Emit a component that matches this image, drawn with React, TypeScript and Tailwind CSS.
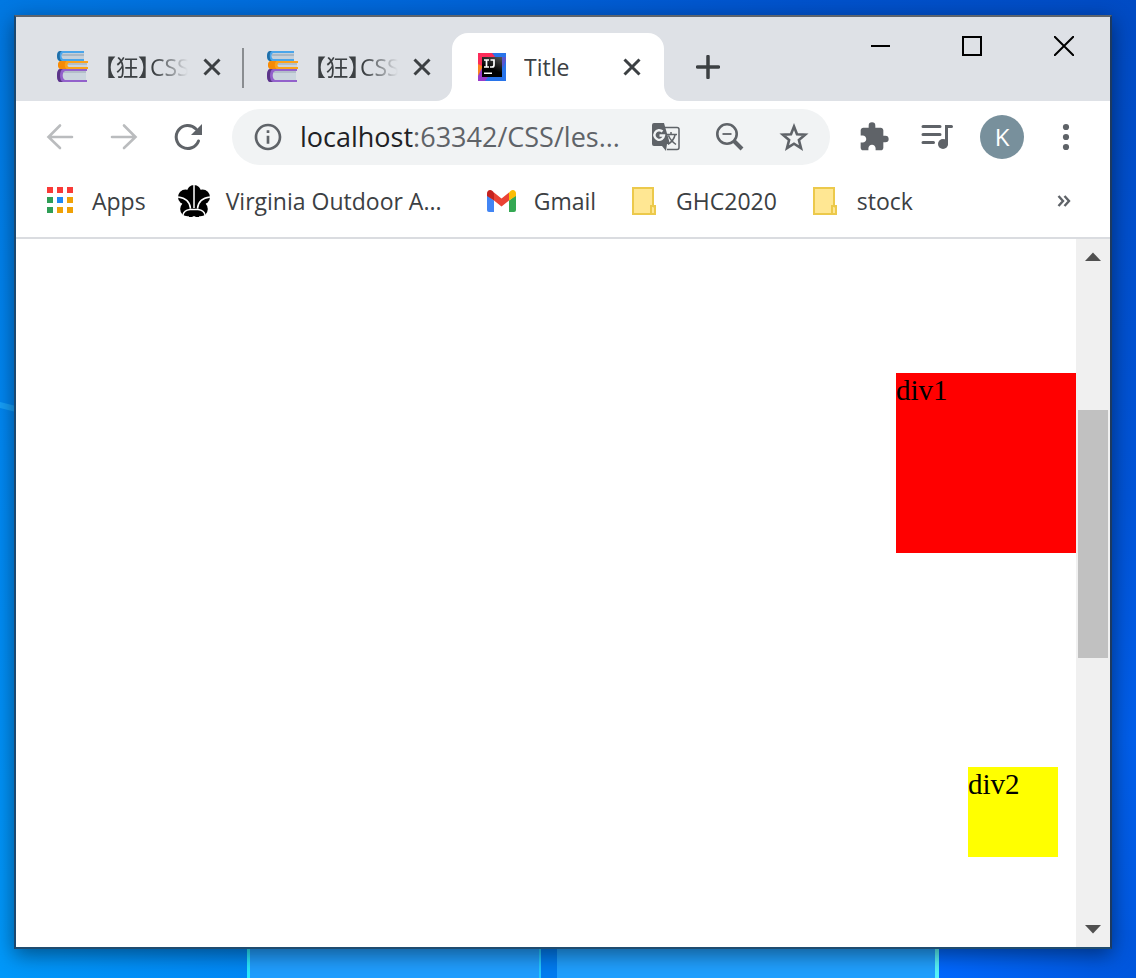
import React from "react";
import { MdExtension, MdInfoOutline, MdStarBorder } from "react-icons/md";

function Wallpaper() {
  return (
    <svg
      aria-hidden="true"
      className="absolute inset-0 h-full w-full"
      viewBox="0 0 1136 978"
      preserveAspectRatio="none"
    >
      <defs>
        <linearGradient id="sky" x1="0" y1="0" x2="1" y2="0">
          <stop offset="0" stopColor="#0078e2" />
          <stop offset="0.35" stopColor="#0066d8" />
          <stop offset="0.7" stopColor="#0052cc" />
          <stop offset="1" stopColor="#004bc4" />
        </linearGradient>
        <linearGradient id="left" x1="0" y1="0" x2="0" y2="1">
          <stop offset="0" stopColor="#0078e2" />
          <stop offset="0.45" stopColor="#0088f4" />
          <stop offset="1" stopColor="#0098fa" />
        </linearGradient>
        <linearGradient id="right" x1="0" y1="0" x2="0" y2="1">
          <stop offset="0" stopColor="#004bc4" />
          <stop offset="0.5" stopColor="#0054d8" />
          <stop offset="0.75" stopColor="#005eea" />
          <stop offset="1" stopColor="#0058e0" />
        </linearGradient>
        <linearGradient id="floorLeft" x1="0" y1="0" x2="1" y2="0">
          <stop offset="0" stopColor="#0098fa" />
          <stop offset="1" stopColor="#0088f6" />
        </linearGradient>
        <linearGradient id="floorRight" x1="0" y1="0" x2="1" y2="0">
          <stop offset="0" stopColor="#0068ff" />
          <stop offset="1" stopColor="#0056dc" />
        </linearGradient>
      </defs>
      <rect width="1136" height="978" fill="url(#sky)" />
      <rect y="16" width="60" height="962" fill="url(#left)" />
      <path d="M0 402l16 4v6l-16-4z" fill="#16a0fa" />
      <rect x="1080" y="16" width="56" height="962" fill="url(#right)" />
      <rect y="930" width="247" height="48" fill="url(#floorLeft)" />
      <rect x="247" y="930" width="293" height="48" fill="#209eff" />
      <rect x="540" y="930" width="17" height="48" fill="#007cf2" />
      <rect x="557" y="930" width="380" height="48" fill="#20a0ff" />
      <rect x="937" y="930" width="199" height="48" fill="url(#floorRight)" />
      <rect x="247" y="930" width="3" height="48" fill="#2ae8ff" />
      <rect x="539" y="930" width="2" height="48" fill="#24c8ff" />
      <rect x="935" y="930" width="4" height="48" fill="#58f4fa" />
    </svg>
  );
}

function Books() {
  return (
    <svg aria-hidden="true" className="size-8 shrink-0" viewBox="0 0 32 32">
      <path d="M5 1h23v9H5z" fill="#c5d0da" />
      <path d="M6 3h22v2H6z" fill="#a9b7c4" />
      <path d="M4 0h24v2H7C5 3 5 7 7 8h21v2H4C0 10 0 0 4 0z" fill="#4aa5ea" />
      <path d="M4 0C0 0 0 10 4 10h2C3 9 3 1 6 0z" fill="#206fa8" />
      <path d="M8 11h23v7H8z" fill="#cbd5de" />
      <path d="M10 12h21v2H10z" fill="#b3bfca" />
      <path d="M5 10h27v2H13c-2 0-2 4 0 4h19v2H5c-4 0-4-8 0-8z" fill="#fba31c" />
      <path d="M5 10c-4 0-4 8 0 8h6c-3-1-3-7 0-8z" fill="#f58a08" />
      <path d="M7 19h23v11H7z" fill="#cbd5de" />
      <path d="M8 20h22v2H8z" fill="#b3bfca" />
      <path d="M4 18h27v2H9c-3 1-3 8 0 9h22v2H4c-4 0-4-13 0-13z" fill="#9261cb" />
      <path d="M4 18c-4 0-4 13 0 13h3c-4-1-4-12 0-13z" fill="#5a3488" />
    </svg>
  );
}

function IdeaLogo() {
  return (
    <svg aria-hidden="true" className="size-8 shrink-0" viewBox="0 0 32 32">
      <defs>
        <linearGradient id="ideaScreen" x1="1" y1="0" x2="0.7" y2="0.7">
          <stop offset="0" stopColor="#555" />
          <stop offset="1" stopColor="#000" />
        </linearGradient>
      </defs>
      <path d="M2 2h28v28H2z" fill="#2874ea" />
      <path d="M2 2h14l4 5-7 13L2 16z" fill="#fc2b59" />
      <path d="M24 6h6v3l-3 8z" fill="#5b57cf" />
      <path d="M2 13l4 2v10l-4 2z" fill="#fb8421" />
      <path d="M2 25l4-8v9h6l-3 4H2z" fill="#9a3bca" />
      <path d="M6 6h20v20H6z" fill="url(#ideaScreen)" />
      <path
        d="M8 9h5M10.500 9v7M8 16h5M14.500 9h3.500v5q0 2-2 2h-2"
        fill="none"
        stroke="#fff"
        strokeWidth="1.700"
      />
      <path d="M8 21.500h8v1.500H8z" fill="#fff" />
    </svg>
  );
}

function CloseGlyph() {
  return (
    <svg aria-hidden="true" className="size-6" viewBox="0 0 24 24">
      <path d="M4.500 4.500l15 15M19.500 4.500l-15 15" stroke="#3c4043" strokeWidth="3" />
    </svg>
  );
}

function Tab({
  title,
  active = false,
  divider = false,
}: {
  title: string;
  active?: boolean;
  divider?: boolean;
}) {
  return (
    <div
      className={
        active
          ? "relative flex h-[68px] w-[212px] min-w-0 items-center rounded-t-2xl bg-white pr-5 pl-6"
          : "relative flex h-[68px] w-[210px] min-w-0 items-center pr-[18px] pl-6"
      }
    >
      {divider && <span className="absolute top-[15px] left-0 h-10 w-[2px] bg-[#8a8d91]" />}
      {active && (
        <>
          <span className="absolute bottom-0 -left-4 size-4 bg-white">
            <span className="block size-4 rounded-br-2xl bg-[#dee1e6]" />
          </span>
          <span className="absolute -right-4 bottom-0 size-4 bg-white">
            <span className="block size-4 rounded-bl-2xl bg-[#dee1e6]" />
          </span>
        </>
      )}
      {active ? <IdeaLogo /> : <Books />}
      <button
        type="button"
        role="tab"
        aria-selected={active}
        className={
          active
            ? "ml-4 min-w-0 flex-1 overflow-hidden text-left whitespace-nowrap"
            : "ml-4 min-w-0 flex-1 overflow-hidden mask-r-from-60% mask-r-to-100% text-left whitespace-nowrap [font-feature-settings:'palt']"
        }
      >
        {title}
      </button>
      <button type="button" aria-label="Close tab" className="ml-3 shrink-0">
        <CloseGlyph />
      </button>
    </div>
  );
}

function TabStrip() {
  return (
    <div className="flex h-[84px] items-start bg-[#dee1e6]">
      <div role="tablist" className="flex min-w-0 self-end pl-4">
        <Tab title="【狂】CSS" />
        <Tab title="【狂】CSS" divider />
        <Tab title="Title" active />
      </div>
      <button
        type="button"
        aria-label="New tab"
        className="mb-[14px] ml-6 flex size-10 items-center justify-center self-end"
      >
        <svg aria-hidden="true" className="size-6" viewBox="0 0 24 24">
          <path
            d="M12 1.500v21M1.500 12h21"
            stroke="#3c4043"
            strokeWidth="3.500"
            strokeLinecap="round"
          />
        </svg>
      </button>
      <div className="ml-auto flex">
        <button type="button" aria-label="Minimize" className="flex h-[58px] w-[92px] items-center justify-center">
          <svg aria-hidden="true" className="size-5" viewBox="0 0 20 20">
            <path d="M1 9h20v2H1z" />
          </svg>
        </button>
        <button type="button" aria-label="Maximize" className="flex h-[58px] w-[92px] items-center justify-center">
          <svg aria-hidden="true" className="size-5" viewBox="0 0 20 20">
            <path d="M1 1h18v18H1z" fill="none" stroke="#000" strokeWidth="2" />
          </svg>
        </button>
        <button type="button" aria-label="Close" className="flex h-[58px] w-[92px] items-center justify-center">
          <svg aria-hidden="true" className="size-5" viewBox="0 0 20 20">
            <path d="M0 0l20 20M20 0L0 20" stroke="#000" strokeWidth="2" />
          </svg>
        </button>
      </div>
    </div>
  );
}

function ToolButton({ label, children }: { label: string; children: React.ReactNode }) {
  return (
    <button
      type="button"
      aria-label={label}
      className="flex h-14 w-16 shrink-0 items-center justify-center text-[#5f6368]"
    >
      {children}
    </button>
  );
}

function Toolbar() {
  return (
    <div className="flex h-[72px] items-center px-3">
      <ToolButton label="Back">
        <svg aria-hidden="true" className="size-8" viewBox="0 0 32 32" fill="none" stroke="#babcbe" strokeWidth="2.600" strokeLinecap="round">
          <path d="M4.500 16H28M16 4.500L4.500 16 16 27" />
        </svg>
      </ToolButton>
      <ToolButton label="Forward">
        <svg aria-hidden="true" className="size-8" viewBox="0 0 32 32" fill="none" stroke="#babcbe" strokeWidth="2.600" strokeLinecap="round">
          <path d="M27.500 16H4M16 4.500L27.500 16 16 27" />
        </svg>
      </ToolButton>
      <ToolButton label="Reload">
        <svg aria-hidden="true" className="size-8" viewBox="0 0 32 32">
          <path
            d="M24 8A11.500 11.500 0 1 0 26.500 20"
            fill="none"
            stroke="currentColor"
            strokeWidth="3"
            strokeLinecap="round"
          />
          <path d="M30 3v11H19z" fill="currentColor" />
        </svg>
      </ToolButton>
      <div className="mx-3 flex h-14 min-w-0 flex-1 items-center rounded-full bg-[#f1f3f4] pr-1 pl-5">
        <MdInfoOutline aria-hidden="true" className="size-8 shrink-0 text-[#5f6368]" />
        <div className="relative ml-4 h-full min-w-0 flex-1">
          <p className="truncate text-[27px] leading-[56px] text-[#5f6368]">
            <span className="text-[#202124]">localhost</span>:63342/CSS/les...
          </p>
          <input
            type="text"
            aria-label="Address"
            className="absolute inset-0 bg-transparent outline-none"
          />
        </div>
        <ToolButton label="Translate this page">
          <svg aria-hidden="true" className="size-8" viewBox="0 0 32 32">
            <path
              d="M15 6.500h12a2 2 0 0 1 2 2v18a2 2 0 0 1-2 2H17"
              fill="none"
              stroke="currentColor"
              strokeWidth="1.500"
            />
            <path d="M4 2h10l6 21h-3l-1 7-4-5H4a2 2 0 0 1-2-2V4a2 2 0 0 1 2-2z" fill="currentColor" />
            <path
              d="M12.500 10.500A4.800 4.800 0 1 0 14 14.500H9.500"
              fill="none"
              stroke="#f1f3f4"
              strokeWidth="2.400"
            />
            <path
              d="M17 13.500h10M21 11v2.500M25 14c-.8 4-3.500 7-7 9.500M18.500 14.500c1.500 4 4 6.500 7.500 9"
              fill="none"
              stroke="currentColor"
              strokeWidth="1.500"
            />
          </svg>
        </ToolButton>
        <ToolButton label="Zoom">
          <svg aria-hidden="true" className="size-8" viewBox="0 0 32 32" fill="none" stroke="currentColor">
            <circle cx="13" cy="13" r="9.700" strokeWidth="2.600" />
            <path d="M20 20l8 8" strokeWidth="4" />
            <path d="M8.500 13h9" strokeWidth="1.800" />
          </svg>
        </ToolButton>
        <ToolButton label="Bookmark this page">
          <svg aria-hidden="true" className="size-8" viewBox="0 0 32 32">
            <path
              d="M16 5.500l3 7.700 8.200.5-6.300 5.300 2.100 8.200-7-4.500-7 4.500 2.100-8.200-6.300-5.300 8.200-.5z"
              fill="none"
              stroke="currentColor"
              strokeWidth="2.600"
            />
          </svg>
        </ToolButton>
      </div>
      <ToolButton label="Extensions">
        <MdExtension aria-hidden="true" className="size-8" />
      </ToolButton>
      <ToolButton label="Media controls">
        <svg aria-hidden="true" className="h-8 w-9" viewBox="0 0 36 32">
          <path
            d="M3 5.500h17M3 13.500h17M3 21.500h10.500"
            stroke="currentColor"
            strokeWidth="3"
            strokeLinecap="round"
          />
          <path d="M26.500 23V5.500h5" fill="none" stroke="currentColor" strokeWidth="3" strokeLinecap="round" />
          <circle cx="23" cy="23" r="5" fill="currentColor" />
        </svg>
      </ToolButton>
      <ToolButton label="Profile">
        <span className="flex size-11 items-center justify-center rounded-full bg-[#78909c] text-2xl text-white">
          K
        </span>
      </ToolButton>
      <ToolButton label="Menu">
        <svg aria-hidden="true" className="size-8" viewBox="0 0 32 32" fill="currentColor">
          <circle cx="16" cy="6" r="3.100" />
          <circle cx="16" cy="16" r="3.100" />
          <circle cx="16" cy="26" r="3.100" />
        </svg>
      </ToolButton>
    </div>
  );
}

function AppsIcon() {
  const dots = [
    ["#f93a37", "#f93a37", "#f93a37"],
    ["#2f9e56", "#1e88f5", "#f0a106"],
    ["#2f9e56", "#f0a106", "#f0a106"],
  ];
  return (
    <svg aria-hidden="true" className="size-8 shrink-0" viewBox="0 0 32 32">
      {dots.map((row, y) =>
        row.map((fill, x) => (
          <rect key={`${x}-${y}`} x={3 + x * 10} y={2 + y * 10} width="6" height="6" fill={fill} />
        )),
      )}
    </svg>
  );
}

function BlossomIcon() {
  return (
    <svg aria-hidden="true" className="size-8 shrink-0" viewBox="0 0 32 32">
      <circle cx="16" cy="7" r="7" />
      <circle cx="7.500" cy="12" r="7.500" />
      <circle cx="24.500" cy="12" r="7.500" />
      <circle cx="9.500" cy="24" r="7.300" />
      <circle cx="22.500" cy="24" r="7.300" />
      <path d="M8 8h16v18l-3 6h-3l-2-1-2 1h-3l-3-6z" />
      <path
        d="M16 0v23M0 12c8 1 12 5 12.500 11.500M32 12c-8 1-12 5-12.500 11.500M11 24.500h10M5 30c.5-3 3-5 7-5.500M27 30c-.5-3-3-5-7-5.500"
        fill="none"
        stroke="#fff"
        strokeWidth="1.500"
      />
    </svg>
  );
}

function GmailIcon() {
  return (
    <svg aria-hidden="true" className="size-8 shrink-0" viewBox="0 0 32 32">
      <path d="M1 10l7 5.500V27H3a2 2 0 0 1-2-2z" fill="#4285f4" />
      <path d="M23 15.500l7-5.500v15a2 2 0 0 1-2 2h-5z" fill="#34a853" />
      <path d="M8 7.500l7.500 6 7.500-6v8l-7.500 6-7.500-6z" fill="#ea4335" />
      <path d="M1 11V8.500c0-3 3-4.500 5.500-2.500L8 7.500v8z" fill="#c5221f" />
      <path d="M30 11V8.500c0-3-3-4.500-5.500-2.500L23 7.500v8z" fill="#fbbc04" />
    </svg>
  );
}

function FolderIcon() {
  return (
    <svg aria-hidden="true" className="size-8 shrink-0" viewBox="0 0 32 32" stroke="#ecc94b" strokeWidth="2">
      <path d="M5 3h20v18h2v8H5z" fill="#ffe793" />
      <path d="M25 20v1h-2v8h3a1 1 0 0 0 1-1v-6l-2-1" fill="#ffe793" />
    </svg>
  );
}

function Bookmark({
  icon,
  label,
  wide = false,
}: {
  icon: React.ReactNode;
  label: string;
  wide?: boolean;
}) {
  return (
    <a href="#" className="flex shrink-0 items-center gap-4">
      {icon}
      <span className={wide ? "w-[228px] leading-[30px]" : "leading-[30px]"}>{label}</span>
    </a>
  );
}

function BookmarksBar() {
  return (
    <nav
      aria-label="Bookmarks"
      className="flex h-[66px] items-center border-b-2 border-[#dadce0] pr-9 pb-2 pl-7"
    >
      <div className="flex min-w-0 flex-1 gap-8 overflow-hidden">
        <Bookmark icon={<AppsIcon />} label="Apps" />
        <Bookmark icon={<BlossomIcon />} label="Virginia Outdoor A..." wide />
        <Bookmark icon={<GmailIcon />} label="Gmail" />
        <Bookmark icon={<FolderIcon />} label="GHC2020" />
        <Bookmark icon={<FolderIcon />} label="stock" />
      </div>
      <button type="button" aria-label="More bookmarks" className="flex size-5 items-center justify-center">
        <svg aria-hidden="true" className="size-4" viewBox="0 0 16 16" fill="none" stroke="#5f6368" strokeWidth="2.400">
          <path d="M2.500 3l4.500 5-4.500 5M8.500 3l4.500 5-4.500 5" />
        </svg>
      </button>
    </nav>
  );
}

function Scrollbar() {
  return (
    <div className="flex w-[34px] shrink-0 flex-col bg-[#f0f0f0]">
      <button type="button" aria-label="Scroll up" className="h-[34px]">
        <svg aria-hidden="true" viewBox="0 0 34 34" fill="#505050">
          <path d="M9 22l8-8.500 8 8.500z" />
        </svg>
      </button>
      <span className="grow-[137]" />
      <span className="mx-[2px] grow-[248] bg-[#c1c1c1]" />
      <span className="grow-[255]" />
      <button type="button" aria-label="Scroll down" className="h-[34px]">
        <svg aria-hidden="true" viewBox="0 0 34 34" fill="#505050">
          <path d="M9 12l8 8.500 8-8.500z" />
        </svg>
      </button>
    </div>
  );
}

export default function App() {
  return (
    <div className="relative flex min-h-screen flex-col pt-[15px] pr-6 pb-[29px] pl-[14px] font-['Open_Sans','Noto_Sans_CJK_SC',sans-serif] text-[23px] leading-8 text-[#3c4043]">
      <Wallpaper />
      <div className="relative flex flex-1 flex-col border-2 border-t-[#5e646c] border-r-[#1d3a60] border-b-[#1f4c70] border-l-[#1b4870] bg-white shadow-[0_6px_20px_rgba(0,0,0,0.45)]">
        <TabStrip />
        <Toolbar />
        <BookmarksBar />
        <div className="flex flex-1">
          <main className="flex min-w-0 flex-1 flex-col items-end pt-[134px] font-['Liberation_Serif',serif] text-[29px] leading-[34px] text-black">
            <div className="size-[180px] bg-[#ff0000]">div1</div>
            <div className="mt-[214px] mr-[18px] size-[90px] bg-[#ffff00]">div2</div>
          </main>
          <Scrollbar />
        </div>
      </div>
    </div>
  );
}
